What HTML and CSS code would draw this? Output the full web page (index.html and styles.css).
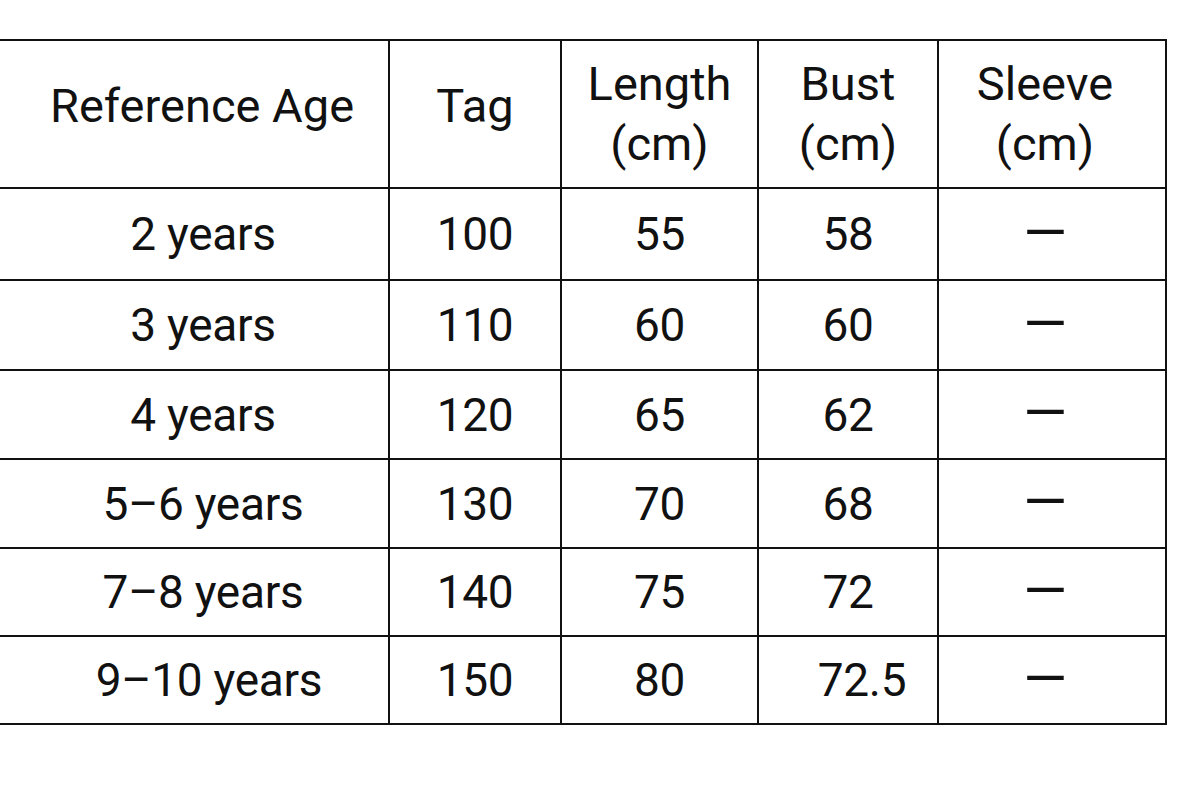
FILE: index.html
```html
<!DOCTYPE html>
<html>
<head>
<meta charset="utf-8">
<link rel="stylesheet" href="styles.css">
</head>
<body>
<table class="size-table">
  <colgroup>
    <col class="c-age">
    <col class="c-tag">
    <col class="c-len">
    <col class="c-bust">
    <col class="c-sleeve">
  </colgroup>
  <thead>
    <tr>
      <th class="age single">Reference Age</th>
      <th class="single">Tag</th>
      <th>Length<br>(cm)</th>
      <th>Bust<br>(cm)</th>
      <th class="sleeve">Sleeve<br>(cm)</th>
    </tr>
  </thead>
  <tbody>
    <tr class="r1"><td class="age">2 years</td><td>100</td><td>55</td><td>58</td><td class="sleeve"><span class="dash">—</span></td></tr>
    <tr class="r2"><td class="age">3 years</td><td>110</td><td>60</td><td>60</td><td class="sleeve"><span class="dash">—</span></td></tr>
    <tr class="r3"><td class="age">4 years</td><td>120</td><td>65</td><td>62</td><td class="sleeve"><span class="dash">—</span></td></tr>
    <tr class="r4"><td class="age">5–6 years</td><td>130</td><td>70</td><td>68</td><td class="sleeve"><span class="dash">—</span></td></tr>
    <tr class="r5"><td class="age">7–8 years</td><td>140</td><td>75</td><td>72</td><td class="sleeve"><span class="dash">—</span></td></tr>
    <tr class="r6"><td class="age wide">9–10 years</td><td>150</td><td>80</td><td class="offset">72.5</td><td class="sleeve"><span class="dash">—</span></td></tr>
  </tbody>
</table>
</body>
</html>
```

FILE: styles.css
```css
html, body {
  margin: 0;
  padding: 0;
  background: #ffffff;
}
body {
  padding-top: 39px;
  font-family: Roboto, "Liberation Sans", sans-serif;
  color: #111111;
}
.size-table {
  border-collapse: collapse;
  table-layout: fixed;
  width: 1166px;
}
.c-age { width: 389px; }
.c-tag { width: 172px; }
.c-len { width: 197px; }
.c-bust { width: 180px; }
.c-sleeve { width: 228px; }

.size-table th,
.size-table td {
  border: 2px solid #111111;
  text-align: center;
  vertical-align: middle;
  font-size: 46px;
  font-weight: 400;
  padding: 0;
  line-height: 60px;
  letter-spacing: -0.3px;
}
.size-table th {
  font-size: 47px;
  padding-top: 0;
  letter-spacing: 0;
}
.size-table th.single {
  padding-bottom: 16px;
}
.size-table th.age,
.size-table td.age {
  border-left: none;
  padding-left: 16px;
}
.size-table td.age {
  padding-left: 18px;
}
.size-table td.age.wide {
  padding-left: 30px;
}
.size-table td.offset {
  padding-left: 28px;
}
.size-table .sleeve {
  padding-right: 14px;
}
.dash {
  font-size: 56px;
}
.size-table thead tr { height: 148px; }
.size-table tbody tr { height: 89px; }
.size-table .r1 { height: 92px; }
.size-table .r2 { height: 90px; }
.size-table .r5,
.size-table .r6 { height: 88px; }
```
